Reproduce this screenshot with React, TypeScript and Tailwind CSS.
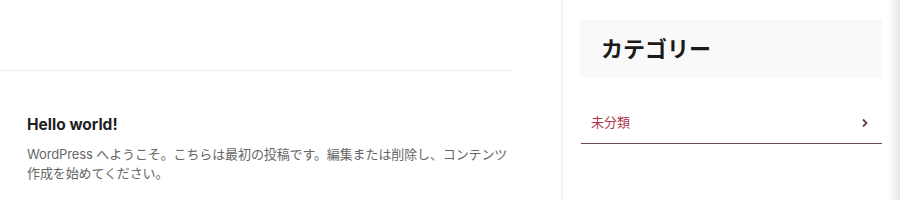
import React from 'react';

const App: React.FC = () => {
  return (
    <div className="flex h-[200px] w-[900px] overflow-hidden bg-white font-['Inter','Noto_Sans_CJK_JP',sans-serif]">
      <main className="w-[512px] shrink-0">
        <div className="h-[71px] border-b border-[#ededed]" />
        <article className="pl-[27px] pt-[45px]">
          <h2 className="text-[15.5px] font-bold leading-[18px] text-[#222]">Hello world!</h2>
          <p className="mt-[11px] text-[13px] leading-[19px] tracking-[-0.12px] text-[#666]">
            WordPress へようこそ。こちらは最初の投稿です。編集または削除し、コンテンツ作成を始めてください。
          </p>
        </article>
      </main>
      <div className="w-[49px] shrink-0" />
      <aside className="flex w-[339px] shrink-0 border-l-2 border-[#f4f4f4]">
        <div className="w-[325px] shrink-0 pl-[17px] pt-[20px]">
          <div className="flex h-[58px] w-[302px] items-center bg-[#f9f9f9] pl-[21px]">
            <h3 className="text-[22px] font-bold leading-none text-[#1a1a1a]">カテゴリー</h3>
          </div>
          <a className="mt-[24px] ml-[1px] flex h-[42px] w-[301px] items-center justify-between border-b border-[#6e4a5c] pl-[10px] pr-[13px] text-[13px] text-[#b0374f]">
            <span>未分類</span>
            <svg width="8" height="10" viewBox="0 0 8 10" fill="none" className="text-[#6b3a55]">
              <path d="M2 1.5 5.5 5 2 8.5" stroke="currentColor" strokeWidth="1.8" />
            </svg>
          </a>
        </div>
        <div className="flex-1 bg-gradient-to-r from-white via-[#f2f2f2] to-[#e4e4e4]" />
      </aside>
    </div>
  );
};

export default App;
